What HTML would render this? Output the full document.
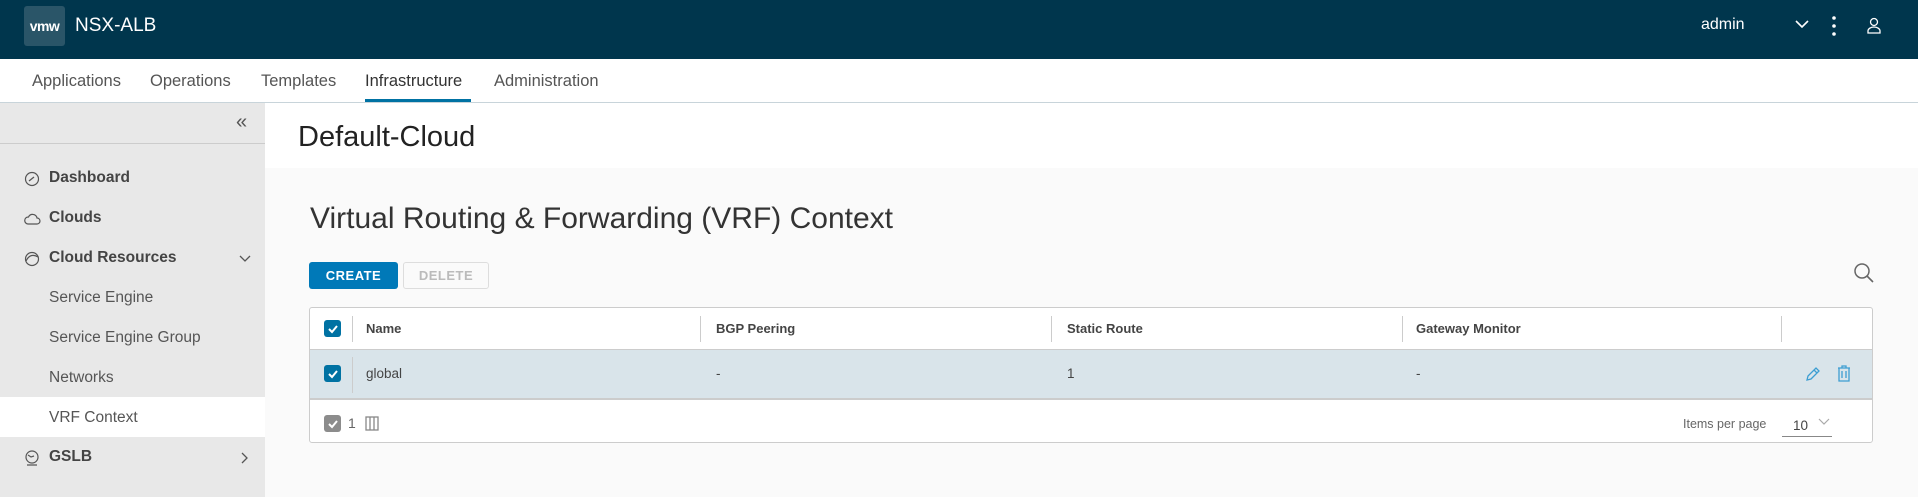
<!DOCTYPE html>
<html><head><meta charset="utf-8"><style>
*{margin:0;padding:0;box-sizing:border-box}
body{width:1918px;height:497px;overflow:hidden;background:#fafafa;font-family:"Liberation Sans",sans-serif;position:relative;color:#333}
.a{position:absolute;white-space:nowrap}
.hdr{left:0;top:0;width:1918px;height:59px;background:#00364d}
.nav{left:0;top:59px;width:1918px;height:44px;background:#fff;border-bottom:1px solid #c8d4da}
.nav span{position:absolute;top:13px;font-size:16.5px;color:#555}
.side{left:0;top:103px;width:265px;height:394px;background:#e8e8e8}
.si{position:absolute;left:49px;font-size:15.5px;font-weight:bold;color:#444}
.ss{position:absolute;left:49px;font-size:15.5px;color:#555}
.th{position:absolute;top:13px;font-size:13px;font-weight:bold;color:#444}
.td{position:absolute;top:16px;font-size:13.5px;color:#444}
.sep{position:absolute;width:1px;background:#ccc}
.cb{position:absolute;width:17px;height:17px;border-radius:3px;background:#0072a3}
</style></head><body>
<div class="a hdr">
  <div class="a" style="left:24px;top:6px;width:41px;height:40px;background:#2a5568;border-radius:3px;color:#fff;font-size:14px;font-weight:bold;text-align:center;line-height:40px;letter-spacing:-0.5px">vmw</div>
  <div class="a" style="left:75px;top:15px;font-size:19px;color:#fff">NSX-ALB</div>
  <div class="a" style="left:1701px;top:16px;font-size:16px;color:#fff">admin</div>
  <svg class="a" style="left:1794px;top:18px" width="16" height="12"><path d="M2 3l6 6 6-6" stroke="#fff" stroke-width="1.6" fill="none"/></svg>
  <svg class="a" style="left:1831px;top:15px" width="6" height="22"><circle cx="3" cy="3" r="1.8" fill="#fff"/><circle cx="3" cy="11" r="1.8" fill="#fff"/><circle cx="3" cy="19" r="1.8" fill="#fff"/></svg>
  <svg class="a" style="left:1866px;top:17px" width="16" height="18"><circle cx="8" cy="5" r="3.5" stroke="#fff" stroke-width="1.3" fill="none"/><path d="M2 16v-2a6 4 0 0 1 12 0v2z" stroke="#fff" stroke-width="1.3" fill="none"/></svg>
</div>
<div class="a nav">
  <span style="left:32px">Applications</span><span style="left:150px">Operations</span><span style="left:261px">Templates</span><span style="left:365px;color:#333">Infrastructure</span><span style="left:494px">Administration</span>
  <div class="a" style="left:365px;top:40px;width:106px;height:3px;background:#0072a3"></div>
</div>
<div class="a side">
  <div class="a" style="left:236px;top:8px;font-size:20px;color:#555">«</div>
  <div class="a" style="left:0;top:40px;width:265px;height:1px;background:#ccc"></div>
  <svg class="a" style="left:24px;top:68px" width="16" height="16"><circle cx="8" cy="8" r="6.5" stroke="#555" stroke-width="1.2" fill="none"/><path d="M5 10l5-4" stroke="#555" stroke-width="1.3"/></svg>
  <div class="si" style="top:66px">Dashboard</div>
  <svg class="a" style="left:24px;top:109px" width="17" height="14"><path d="M4 12h9a3 3 0 0 0 0-6 4.5 4.5 0 0 0-8.5-1A3.5 3.5 0 0 0 4 12z" stroke="#555" stroke-width="1.2" fill="none"/></svg>
  <div class="si" style="top:106px">Clouds</div>
  <svg class="a" style="left:24px;top:148px" width="16" height="16"><circle cx="8" cy="8" r="6.5" stroke="#555" stroke-width="1.2" fill="none"/><path d="M2 10c3-6 7-7 12-4" stroke="#555" stroke-width="1.2" fill="none"/></svg>
  <div class="si" style="top:146px">Cloud Resources</div>
  <svg class="a" style="left:238px;top:151px" width="14" height="10"><path d="M2 2l5 5 5-5" stroke="#555" stroke-width="1.3" fill="none"/></svg>
  <div class="ss" style="top:186px">Service Engine</div>
  <div class="ss" style="top:226px">Service Engine Group</div>
  <div class="ss" style="top:266px">Networks</div>
  <div class="a" style="left:0;top:294px;width:265px;height:40px;background:#fff"></div>
  <div class="ss" style="top:306px">VRF Context</div>
  <svg class="a" style="left:24px;top:347px" width="16" height="17"><circle cx="8" cy="7" r="6" stroke="#555" stroke-width="1.2" fill="none"/><path d="M4 5l3 2 3-1M3 15h10" stroke="#555" stroke-width="1.2" fill="none"/></svg>
  <div class="si" style="top:345px">GSLB</div>
  <svg class="a" style="left:240px;top:348px" width="10" height="14"><path d="M2 2l5 5-5 5" stroke="#555" stroke-width="1.3" fill="none"/></svg>
</div>
<div class="a" style="left:265px;top:103px;width:1653px;height:65px;background:#fff"></div>
<div class="a" style="left:298px;top:121px;font-size:29px;color:#222">Default-Cloud</div>
<div class="a" style="left:310px;top:202px;font-size:30px;color:#333">Virtual Routing &amp; Forwarding (VRF) Context</div>
<div class="a" style="left:309px;top:262px;width:89px;height:27px;background:#0079b8;border-radius:3px;color:#fff;font-size:13px;font-weight:bold;text-align:center;line-height:27px;letter-spacing:.5px">CREATE</div>
<div class="a" style="left:403px;top:262px;width:86px;height:27px;border:1px solid #ddd;border-radius:3px;color:#bbb;font-size:13px;font-weight:bold;text-align:center;line-height:25px;letter-spacing:.5px">DELETE</div>
<svg class="a" style="left:1853px;top:262px" width="22" height="22"><circle cx="9" cy="9" r="7" stroke="#666" stroke-width="1.5" fill="none"/><path d="M14 14l6 6" stroke="#666" stroke-width="1.6"/></svg>
<div class="a" style="left:309px;top:307px;width:1564px;height:136px;border:1px solid #ccc;border-radius:3px;background:#fff;overflow:hidden">
  <div class="cb" style="left:14px;top:12px"></div>
  <svg class="a" style="left:17px;top:15px" width="12" height="12"><path d="M2 6l3 3 5-6" stroke="#fff" stroke-width="2" fill="none"/></svg>
  <div class="sep" style="left:42px;top:8px;height:26px"></div>
  <div class="th" style="left:56px">Name</div>
  <div class="sep" style="left:390px;top:8px;height:26px"></div>
  <div class="th" style="left:406px">BGP Peering</div>
  <div class="sep" style="left:741px;top:8px;height:26px"></div>
  <div class="th" style="left:757px">Static Route</div>
  <div class="sep" style="left:1092px;top:8px;height:26px"></div>
  <div class="th" style="left:1106px">Gateway Monitor</div>
  <div class="sep" style="left:1471px;top:8px;height:26px"></div>
  <div class="a" style="left:0;top:41px;width:1564px;height:51px;background:#d9e4ea;border-top:1px solid #ccc;border-bottom:2px solid #ccc">
    <div class="cb" style="left:14px;top:15px"></div>
    <svg class="a" style="left:17px;top:18px" width="12" height="12"><path d="M2 6l3 3 5-6" stroke="#fff" stroke-width="2" fill="none"/></svg>
    <div class="sep" style="left:42px;top:7px;height:36px"></div>
    <div class="td" style="left:56px">global</div>
    <div class="td" style="left:406px">-</div>
    <div class="td" style="left:757px">1</div>
    <div class="td" style="left:1106px">-</div>
    <svg class="a" style="left:1495px;top:16px" width="16" height="16"><path d="M2 14l1-4 8-8 3 3-8 8zM9 4l3 3" stroke="#3d9ed2" stroke-width="1.3" fill="none"/></svg>
    <svg class="a" style="left:1527px;top:15px" width="14" height="17"><path d="M1 3h12M5 3V1h4v2M2 3v13h10V3M5 6v7M9 6v7" stroke="#3d9ed2" stroke-width="1.3" fill="none"/></svg>
  </div>
  <div class="a" style="left:14px;top:107px;width:17px;height:17px;border-radius:3px;background:#8c8c8c"></div>
  <svg class="a" style="left:17px;top:110px" width="12" height="12"><path d="M2 6l3 3 5-6" stroke="#fff" stroke-width="2" fill="none"/></svg>
  <div class="a" style="left:38px;top:107px;font-size:14px;color:#666">1</div>
  <svg class="a" style="left:55px;top:108px" width="14" height="15"><rect x="1" y="1" width="12" height="13" stroke="#888" stroke-width="1.3" fill="none"/><path d="M5 1v13M9 1v13" stroke="#888" stroke-width="1.3"/></svg>
  <div class="a" style="left:1373px;top:109px;font-size:12.5px;color:#666">Items per page</div>
  <div class="a" style="left:1483px;top:110px;font-size:13.5px;color:#444">10</div>
  <svg class="a" style="left:1508px;top:109px" width="12" height="9"><path d="M1 2l5 5 5-5" stroke="#aaa" stroke-width="1.2" fill="none"/></svg>
  <div class="a" style="left:1472px;top:128px;width:50px;height:1px;background:#888"></div>
</div>
</body></html>
